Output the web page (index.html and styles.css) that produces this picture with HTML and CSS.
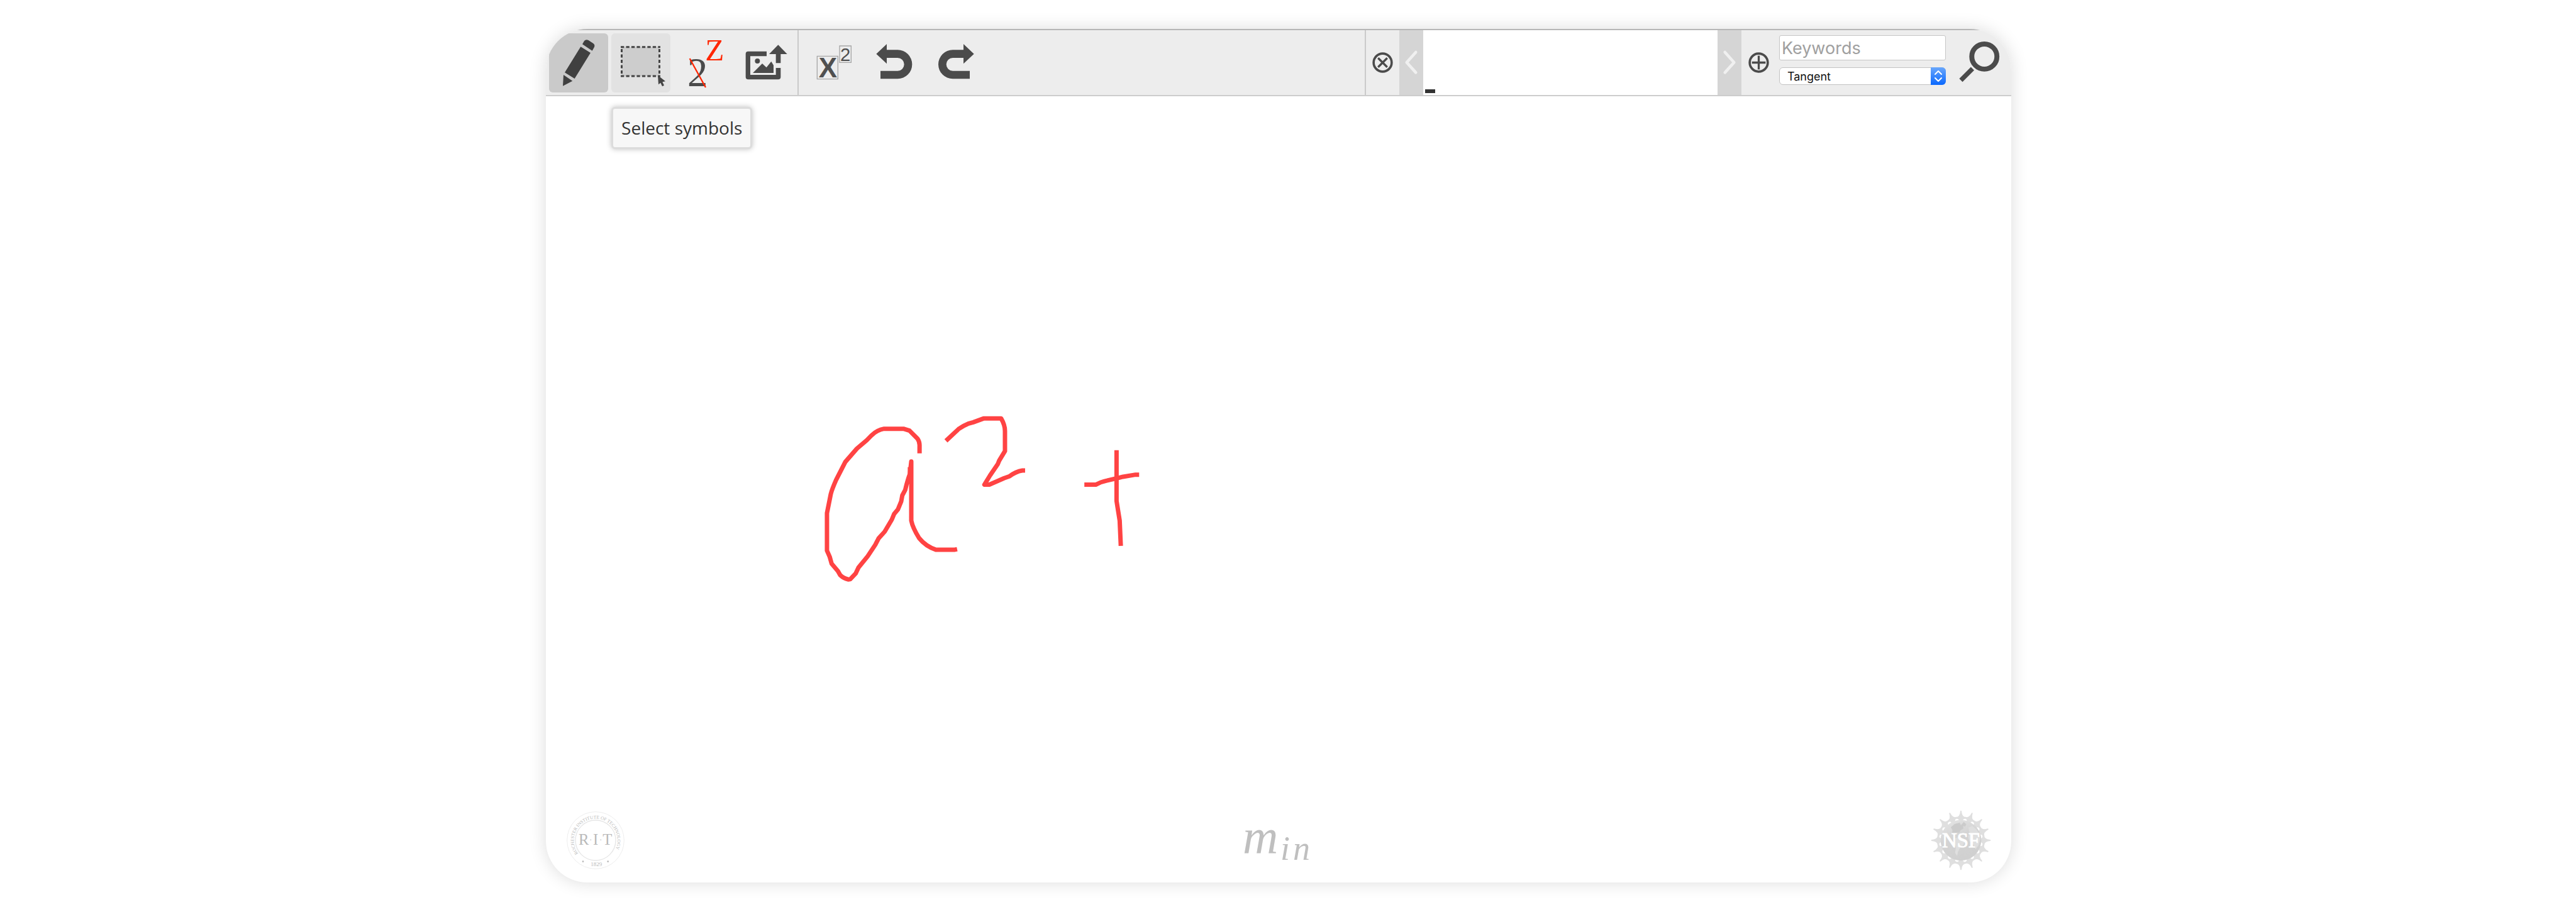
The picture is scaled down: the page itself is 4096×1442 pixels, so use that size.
FILE: index.html
```html
<!DOCTYPE html>
<html lang="en">
<head>
<meta charset="utf-8">
<title>min</title>
<link rel="stylesheet" href="styles.css">
</head>
<body>
<main class="app">
  <header class="toolbar">
    <div class="tools">
      <button class="tool tool-active" type="button" aria-label="Draw">
        <svg class="icon" viewBox="51 68 282 282" fill="#404040">
          <path d="M210 120 219 104Q227 95 239 101L262 116Q271 123 267 133L257 151ZM202 132 249 161 173 284 126 255ZM120 266 163 295 117 319Z"/>
        </svg>
      </button>
      <div class="tool-slot">
        <button class="tool tool-hover" type="button" aria-label="Select symbols" aria-describedby="tip">
          <svg class="icon" viewBox="348 68 282 282">
            <path d="M397 133H577V272H397Z" fill="#cdcdcd"/>
            <path d="M393 133.500H582M393 272H582" fill="none" stroke="#444" stroke-width="9" stroke-dasharray="16 9.400"/>
            <path d="M397.500 143V268M577.500 143V268" fill="none" stroke="#444" stroke-width="9" stroke-dasharray="15 10.500"/>
            <path d="M570 268 606 297 592 300 600 316 591 321 583 304 573 312Z" fill="#444"/>
          </svg>
        </button>
        <span class="tooltip" id="tip" role="tooltip">Select symbols</span>
      </div>
      <button class="tool" type="button" aria-label="Relabel symbol">
        <svg class="icon" viewBox="647 68 282 282">
          <text class="serif" x="713" y="321" font-size="194" fill="#4a4a4a">2</text>
          <text class="serif" x="798" y="197" font-size="148" fill="#ff2600">Z</text>
          <path d="M724 188 800 326" stroke="#ff2600" stroke-width="7"/>
        </svg>
      </button>
      <button class="tool" type="button" aria-label="Upload image">
        <svg class="icon" viewBox="945 68 282 282" fill="#4b4b4b">
          <path d="M1092 154V177H1014V266H1136V233H1159V276Q1159 288 1147 288H1004Q992 288 992 276V166Q992 154 1004 154ZM1136 210V167H1104L1147 123 1190 167H1159V210ZM1026 257 1071 212 1091 231 1114 202 1125 220V257Z"/>
          <circle cx="1048" cy="200" r="12"/>
        </svg>
      </button>
    </div>
    <div class="tools tools-edit">
      <button class="tool" type="button" aria-label="Recognize">
        <svg class="icon" viewBox="32 68 282 282" fill="#505050">
          <path d="M105 177H204V286H105ZM212 128H267V207H212Z" fill="#ededed" stroke="#a6a6a6" stroke-width="4"/>
          <text class="sans bold" x="112" y="277" font-size="132">X</text>
          <text class="sans" x="215" y="199" font-size="88">2</text>
        </svg>
      </button>
      <button class="tool" type="button" aria-label="Undo">
        <svg class="icon" viewBox="330 68 282 282" fill="#4b4b4b">
          <path d="M388 166 438 119V147H490A69 69 0 0 1 490 285H408V247H490A31 31 0 0 0 490 185H438V213Z"/>
        </svg>
      </button>
      <button class="tool" type="button" aria-label="Redo">
        <svg class="icon" viewBox="628 68 282 282" fill="#4b4b4b">
          <path d="M855 166 805 119V147H754A69 69 0 0 0 754 285H835V247H754A31 31 0 0 1 754 185H805V213Z"/>
        </svg>
      </button>
    </div>
    <div class="query">
      <button class="round" type="button" aria-label="Delete expression">
        <svg class="round-icon" viewBox="0 0 100 100" fill="none" stroke="#4b4b4b">
          <circle cx="50" cy="50" r="43.500" stroke-width="11"/>
          <path d="M28 28 72 72M72 28 28 72" stroke-width="10"/>
        </svg>
      </button>
      <button class="strip" type="button" aria-label="Previous">
        <svg class="strip-icon" viewBox="226 54 112 312"><path d="M304 160 260 209 304 258"/></svg>
      </button>
      <div class="slides"><span class="slide-mark"></span></div>
      <button class="strip" type="button" aria-label="Next">
        <svg class="strip-icon" viewBox="72 54 112 312"><path d="M106 160 150 209 106 258"/></svg>
      </button>
      <button class="round round-add" type="button" aria-label="Add expression">
        <svg class="round-icon" viewBox="0 0 100 100" fill="none" stroke="#4b4b4b">
          <circle cx="50" cy="50" r="43.500" stroke-width="11"/>
          <path d="M17 50H83M50 17V83" stroke-width="10"/>
        </svg>
      </button>
      <div class="fields">
        <input class="keywords" type="text" placeholder="Keywords" aria-label="Keywords">
        <div class="engine-wrap">
          <select class="engine" aria-label="Search engine"><option>Tangent</option></select>
          <svg class="stepper" viewBox="0 0 24 28" fill="none" stroke="#fff" stroke-width="2" stroke-linecap="round" stroke-linejoin="round">
            <path d="M7 11 12 6 17 11M7 17 12 22 17 17"/>
          </svg>
        </div>
      </div>
      <button class="search" type="button" aria-label="Search">
        <svg class="search-icon" viewBox="1163 54 312 312" fill="none" stroke="#4b4b4b">
          <circle cx="1347" cy="181" r="60.500" stroke-width="24"/>
          <path d="M1290 239 1234 295" stroke-width="22"/>
        </svg>
      </button>
    </div>
  </header>

  <section class="board" aria-label="Drawing canvas">
    <svg class="ink" viewBox="0 0 2330 1100" fill="none" stroke="#ff4343">
      <g transform="translate(416.400 484.200) scale(.35558 .33188)" stroke-linejoin="round">
        <path d="M500 252V212Q500 196 491 182L455 143 428 134H341Q310 140 286 165L264 189 220 229 168 293 127 379Q108 425 103 447L86 538V718L98 747 107 781 135 816 145 835Q160 851 182 856L190 855 214 828 227 799 268 745 302 690 317 659 344 627 376 569 386 543 403 521 418 482 423 453 436 427Q444 388 457 350L463 291V574Q469 608 498 658 528 698 574 714H655L668 711"/>
        <path d="M457 318V350"/>
        <path d="M618 192 675 135Q696 119 717 110L740 103 786 85H865Q882 116 882 145V241L856 287 850 303 815 358 790 402H812L878 371 902 362Q930 339 960 334H972"/>
        <path d="M1237 402H1288Q1315 387 1340 382L1410 364 1466 354H1482"/>
        <path d="M1381 237V480L1395 574 1400 695"/>
      </g>
    </svg>
  </section>

  <footer class="logos">
    <a class="logo" href="#rit" aria-label="RIT">
      <svg class="rit" viewBox="137 76 276 276" fill="#b9b9b9">
        <defs>
          <path id="ring-top" d="M192 277A104 104 0 1 1 360 275"/>
        </defs>
        <g fill="none">
          <circle cx="275" cy="214" r="136" stroke="#ededed" stroke-width="3"/>
          <circle cx="275" cy="214" r="96" stroke="#e6e6e6" stroke-width="4"/>
        </g>
        <text class="serif" font-size="22"><textPath href="#ring-top">ROCHESTER INSTITUTE OF TECHNOLOGY</textPath></text>
        <text class="serif" y="235" font-size="74"><tspan x="194">R</tspan><tspan x="245" y="223" font-size="40">·</tspan><tspan x="263" y="235">I</tspan><tspan x="293" y="223" font-size="40">·</tspan><tspan x="309" y="235">T</tspan></text>
        <text class="serif" x="279" y="337" font-size="27" text-anchor="middle">1829</text>
        <circle cx="215" cy="315" r="4"/>
        <circle cx="334" cy="315" r="4"/>
      </svg>
    </a>
    <a class="logo" href="#min" aria-label="min">
      <svg class="min" viewBox="0 0 112 70" fill="#bfbfbf">
        <text class="serif italic" x="0" y="56" font-size="78">m</text>
        <text class="serif italic" x="60" y="66" font-size="54">i</text>
        <text class="serif italic" x="80" y="66" font-size="54">n</text>
      </svg>
    </a>
    <a class="logo" href="#nsf" aria-label="NSF">
      <svg class="nsf" viewBox="-141 -141 282 282">
        <defs>
          <linearGradient id="globe" x1="0" y1="0" x2="0.400" y2="1">
            <stop offset="0" stop-color="#e6e6e6"/>
            <stop offset="0.500" stop-color="#d4d4d4"/>
            <stop offset="1" stop-color="#d0d0d0"/>
          </linearGradient>
          <path id="spike" d="M-24-111Q-5-112-3-139A3 3 0 0 1 3-139Q5-112 24-111L21-103Q9-104 10-92H-10Q-9-104-21-103Z"/>
        </defs>
        <g fill="#dfdfdf">
          <use href="#spike"/><use href="#spike" transform="rotate(22.500)"/>
          <use href="#spike" transform="rotate(45)"/><use href="#spike" transform="rotate(67.500)"/>
          <use href="#spike" transform="rotate(90)"/><use href="#spike" transform="rotate(112.500)"/>
          <use href="#spike" transform="rotate(135)"/><use href="#spike" transform="rotate(157.500)"/>
          <use href="#spike" transform="rotate(180)"/><use href="#spike" transform="rotate(202.500)"/>
          <use href="#spike" transform="rotate(225)"/><use href="#spike" transform="rotate(247.500)"/>
          <use href="#spike" transform="rotate(270)"/><use href="#spike" transform="rotate(292.500)"/>
          <use href="#spike" transform="rotate(315)"/><use href="#spike" transform="rotate(337.500)"/>
        </g>
        <circle r="97" fill="url(#globe)"/>
        <path d="M-48-62-30-78-6-84 0-72 14-88 26-76 20-66 10-68 12-56-2-48-8-36-20-38-24-24-30-36-44-26-40-48Z" fill="#cbcbcb"/>
        <path d="M-30-10-10-16 4-12 18 0 12 22-4 36-14 54-18 74-28 60-24 30-36 8ZM36-60 54-68 74-52 86-34 92-6 84 24 70 42 60 20 40 4 34-18 42-34Z" fill="#dfdfdf"/>
        <text class="serif" x="0" y="32" font-size="98" text-anchor="middle" fill="#fff" stroke="#fff" stroke-width="3">NSF</text>
      </svg>
    </a>
  </footer>
</main>
</body>
</html>
```
FILE: styles.css
```css
* {
  box-sizing: border-box;
}

body {
  margin: 0;
  padding: 46px 30px 38px 0;
  background: #fff;
  color: #333;
  font-family: Inter, "Liberation Sans", sans-serif;
}

button {
  padding: 0;
  border: 0;
  background: none;
}

svg {
  display: block;
  overflow: visible;
}

.serif {
  font-family: "Liberation Serif", serif;
}

.sans {
  font-family: "Liberation Sans", sans-serif;
}

.bold {
  font-weight: 700;
}

.italic {
  font-style: italic;
}

.app {
  display: flex;
  flex-direction: column;
  width: 57.3%;
  min-width: 1640px;
  min-height: calc(100vh - 85px);
  margin: 0 auto;
  overflow: hidden;
  border-radius: 66px;
  background: #fff;
  box-shadow: 0 0 28px rgba(0, 0, 0, 0.14);
}

.toolbar {
  display: flex;
  border-top: 2px solid #b6b6b6;
  border-bottom: 2px solid #cdcdcd;
  background: #ededed;
}

.tools {
  display: flex;
  gap: 5px;
  padding: 5px 4px 4px 5px;
  border-right: 2px solid #cacaca;
}

.tools-edit {
  flex: 1;
}

.tool-slot {
  display: flex;
  position: relative;
}

.tool {
  width: 94px;
  height: 94px;
  border-radius: 6px;
}

.tool-active {
  background: #cacaca;
}

.tool-hover {
  background: #e2e2e2;
}

.icon {
  width: 94px;
  height: 94px;
}

.tooltip {
  position: absolute;
  top: 117px;
  left: 0;
  z-index: 1;
  padding: 12px 13px;
  border: 3px solid #dcdcdc;
  border-radius: 6px;
  background: #f7f7f7;
  box-shadow: 0 0 8px rgba(0, 0, 0, 0.25);
  font-family: "Trebuchet MS", "Open Sans", sans-serif;
  font-size: 28px;
  line-height: 37px;
  white-space: nowrap;
}

.query {
  display: flex;
}

.round {
  display: grid;
  place-items: center;
  width: 53px;
}

.round-add {
  width: 56px;
  margin-right: 4px;
}

.round-icon {
  width: 33px;
  height: 33px;
}

.strip {
  width: 38px;
  background: #d5d5d5;
}

.strip-icon {
  width: 38px;
  height: 103px;
  fill: none;
  stroke: #f0f0f0;
  stroke-width: 14px;
  stroke-linecap: round;
  stroke-linejoin: round;
}

.slides {
  display: flex;
  align-items: flex-end;
  width: 468px;
  padding: 3px;
  background: #fff;
}

.slide-mark {
  width: 16px;
  height: 6px;
  background: #333;
}

.fields {
  display: flex;
  flex-direction: column;
  gap: 11px;
  width: 265px;
  padding-top: 8px;
}

.keywords {
  width: 100%;
  height: 40px;
  padding: 0 3px;
  border: 1px solid #c6c6c6;
  border-radius: 3px;
  background: #fff;
  font-family: inherit;
  font-size: 27px;
}

.keywords::placeholder {
  color: #a0a0a0;
}

.engine-wrap {
  position: relative;
  height: 28px;
}

.engine {
  width: 100%;
  height: 28px;
  padding: 0 12px;
  border: 1px solid #c2c2c2;
  border-radius: 6px;
  background: #fff;
  color: #111;
  font-family: inherit;
  font-size: 18px;
  appearance: none;
}

.stepper {
  position: absolute;
  top: 0;
  right: 0;
  width: 24px;
  height: 28px;
  border-radius: 0 6px 6px 0;
  background: linear-gradient(#6aa7fb, #0a68fe);
  pointer-events: none;
}

.search-icon {
  width: 104px;
  height: 103px;
}

.board {
  flex: 1;
}

.ink {
  width: 100%;
}

.ink path {
  stroke-width: 7px;
  vector-effect: non-scaling-stroke;
}

.logos {
  display: flex;
  align-items: center;
  justify-content: space-between;
  padding: 0 33px 20px;
}

.rit {
  width: 92px;
  height: 92px;
}

.min {
  width: 112px;
  height: 70px;
}

.nsf {
  width: 94px;
  height: 94px;
}
```
